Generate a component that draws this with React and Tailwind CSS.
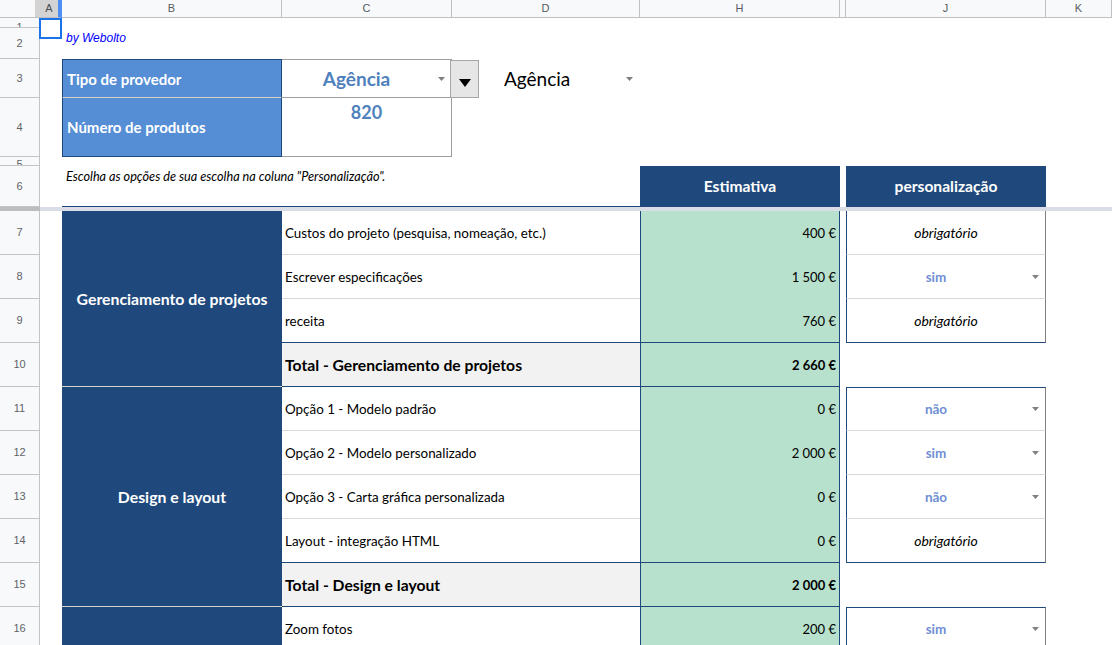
import React from "react";
import clsx from "clsx";

function Tri({ color = "#808080", w = 7, h = 4 }) {
  return (
    <svg width={w} height={h} viewBox={`0 0 ${w} ${h}`}>
      <path d={`M0 0H${w}L${w / 2} ${h}Z`} fill={color} />
    </svg>
  );
}

const colHeads = [
  ["B", "col-start-3"],
  ["C", "col-start-4"],
  ["D", "col-start-5"],
  ["H", "col-start-6"],
  ["", "col-start-7"],
  ["J", "col-start-8"],
  ["K", "col-start-9"],
];

const rowHeads = [
  ["1", "row-start-2", "items-start pt-[3px]"],
  ["2", "row-start-3", "items-center"],
  ["3", "row-start-4", "items-center"],
  ["4", "row-start-5", "items-center"],
  ["5", "row-start-6", "items-start pt-[1px]"],
  ["6", "row-start-7", "items-center"],
  ["7", "row-start-9", "items-center"],
  ["8", "row-start-10", "items-center"],
  ["9", "row-start-11", "items-center"],
  ["10", "row-start-12", "items-center"],
  ["11", "row-start-13", "items-center"],
  ["12", "row-start-14", "items-center"],
  ["13", "row-start-15", "items-center"],
  ["14", "row-start-16", "items-center"],
  ["15", "row-start-17", "items-center"],
  ["16", "row-start-18", "items-center"],
];

const body = [
  { row: "row-start-9", desc: "Custos do projeto (pesquisa, nomeação, etc.)", val: "400 €", j: "obr" },
  { row: "row-start-10", desc: "Escrever especificações", val: "1 500 €", j: "sim" },
  { row: "row-start-11", desc: "receita", val: "760 €", j: "obr", beforeTotal: true },
  { row: "row-start-12", desc: "Total - Gerenciamento de projetos", val: "2 660 €", total: true },
  { row: "row-start-13", desc: "Opção 1 - Modelo padrão", val: "0 €", j: "não", jTop: true },
  { row: "row-start-14", desc: "Opção 2 - Modelo personalizado", val: "2 000 €", j: "sim" },
  { row: "row-start-15", desc: "Opção 3 - Carta gráfica personalizada", val: "0 €", j: "não" },
  { row: "row-start-16", desc: "Layout - integração HTML", val: "0 €", j: "obr", beforeTotal: true },
  { row: "row-start-17", desc: "Total - Design e layout", val: "2 000 €", total: true },
  { row: "row-start-18", desc: "Zoom fotos", val: "200 €", j: "sim", jTop: true },
];

export default function App() {
  return (
    <div className="grid w-[1112px] h-[645px] overflow-hidden bg-white grid-cols-[40px_22px_220px_170px_188px_200px_6px_200px_66px] grid-rows-[18px_10px_31px_39px_59px_9px_41px_4px_repeat(10,44px)] font-['Lato','Open_Sans',sans-serif]">
      {/* corner */}
      <div className="col-start-1 row-start-1 flex bg-[#f8f9fa] border-b border-[#c0c0c0]">
        <div className="flex-1" />
        <div className="w-[5px] bg-[#d3d3d3]" />
      </div>
      {/* column A header (selected) */}
      <div className="col-start-2 row-start-1 flex items-center justify-center bg-[#d3d3d3] border-b border-b-[#c0c0c0] border-r-4 border-r-[#4d8ef5] text-[11px] text-[#4a4d52] font-['Liberation_Sans',Arial,sans-serif]">
        A
      </div>
      {colHeads.map(([l, c]) => (
        <div
          key={c}
          className={clsx(
            c,
            "row-start-1 flex items-center justify-center bg-[#f8f9fa] border-r border-b border-[#c0c0c0] text-[11px] text-[#575b61] font-['Liberation_Sans',Arial,sans-serif]"
          )}
        >
          {l}
        </div>
      ))}

      {/* row headers */}
      {rowHeads.map(([n, r, al]) => (
        <div
          key={r}
          className={clsx(
            r,
            al,
            "col-start-1 flex justify-center overflow-hidden bg-[#f8f9fa] border-r border-b border-[#c4c4c4] text-[11px] leading-[13px] text-[#5f6368] font-['Liberation_Sans',Arial,sans-serif]"
          )}
        >
          {n}
        </div>
      ))}

      {/* freeze bar */}
      <div className="col-start-1 row-start-8 bg-[#bdbdbd]" />
      <div className="col-start-2 col-span-8 row-start-8 bg-[#dadde5]" />

      {/* selection box on A1 */}
      <div className="col-start-2 row-start-2 row-span-2 self-start -ml-px w-[23px] h-[21px] border-2 border-[#1a73e8]" />

      {/* row 2 */}
      <div className="col-start-3 col-span-2 row-start-3 pl-[4px] pt-[3px] text-[12px] leading-[14px] italic text-[#0000ff] font-['Liberation_Sans',Arial,sans-serif]">
        by Webolto
      </div>

      {/* row 3 & 4 labels */}
      <div className="col-start-3 row-start-4 flex items-center pl-[4px] pt-[2px] bg-[#558ed5] border-t border-l border-r border-[#1f497d] border-b border-b-[#d8d0c0] text-white font-bold text-[15px]">
        Tipo de provedor
      </div>
      <div className="col-start-3 row-start-5 flex items-center pl-[4px] bg-[#558ed5] border-l border-r border-b border-[#1f497d] text-white font-bold text-[15px]">
        Número de produtos
      </div>

      {/* C3 dropdown */}
      <div className="col-start-4 row-start-4 flex items-center border-t border-r border-b border-[#9e9e9e]">
        <div className="flex-1 pt-[2px] text-center text-[19px] font-bold text-[#4f81bd]">Agência</div>
        <div className="w-[20px] flex justify-end pr-[6px]">
          <Tri />
        </div>
      </div>
      {/* C4 */}
      <div className="col-start-4 row-start-5 pt-[3px] text-center text-[18px] leading-[22px] font-bold text-[#4f81bd] border-r border-b border-[#9e9e9e]">
        820
      </div>

      {/* D3 */}
      <div className="col-start-5 row-start-4 flex items-stretch">
        <div className="-ml-[2px] mt-px w-[29px] flex justify-center pt-[18px] bg-[#e6e6e6] border border-[#a6a6a6]">
          <Tri color="#000000" w={12} h={8} />
        </div>
        <div className="ml-[25px] pt-[2px] flex items-center text-[19px] text-black">Agência</div>
        <div className="flex-1" />
        <div className="flex items-center pr-[7px]">
          <Tri />
        </div>
      </div>

      {/* row 6 */}
      <div className="col-start-3 col-span-3 row-start-7 pl-[4px] pt-[3px] text-[12.7px] leading-[15px] italic text-black border-b border-[#1f497d]">
        Escolha as opções de sua escolha na coluna "Personalização".
      </div>
      <div className="col-start-6 row-start-7 flex items-center justify-center bg-[#1f497d] text-white font-bold text-[15.6px]">
        Estimativa
      </div>
      <div className="col-start-8 row-start-7 flex items-center justify-center bg-[#1f497d] text-white font-bold text-[15.6px]">
        personalização
      </div>

      {/* B groups */}
      <div className="col-start-3 row-start-9 row-span-4 flex items-center justify-center bg-[#1f497d] border-b border-[#d8d3c8] text-white font-bold text-[15.8px]">
        Gerenciamento de projetos
      </div>
      <div className="col-start-3 row-start-13 row-span-5 flex items-center justify-center bg-[#1f497d] border-b border-[#d8d3c8] text-white font-bold text-[15.8px]">
        Design e layout
      </div>
      <div className="col-start-3 row-start-18 bg-[#1f497d]" />

      {/* body rows */}
      {body.map((b) => (
        <React.Fragment key={b.row}>
          <div
            className={clsx(
              b.row,
              "col-start-4 col-span-2 flex items-center pl-[3px] pt-[2px] border-b text-black",
              b.total ? "bg-[#f2f2f2] font-bold text-[15.7px]" : "text-[13.4px]",
              b.total || b.beforeTotal ? "border-[#1f497d]" : "border-[#d9d9d9]"
            )}
          >
            {b.desc}
          </div>
          <div
            className={clsx(
              b.row,
              "col-start-6 flex items-center justify-end pr-[3px] pt-[2px] bg-[#b7e1cd] border-l border-r border-[#1f497d] text-[13px] text-black",
              b.total && "font-bold",
              (b.total || b.beforeTotal) && "border-b"
            )}
          >
            {b.val}
          </div>
          {!b.total && (
            <div
              className={clsx(
                b.row,
                "col-start-8 flex items-center border-l border-l-[#1f497d] border-r border-r-[#7f7f7f] border-b",
                b.beforeTotal ? "border-b-[#1f497d]" : "border-b-[#d9d9d9]",
                b.jTop && "border-t border-t-[#1f497d]"
              )}
            >
              {b.j === "obr" ? (
                <div className="flex-1 text-center italic text-[14px] text-black">obrigatório</div>
              ) : (
                <>
                  <div className="flex-1 pt-px text-center font-bold text-[13.5px] text-[#6f8fd3]">{b.j}</div>
                  <div className="w-[20px] flex justify-end pr-[6px]">
                    <Tri />
                  </div>
                </>
              )}
            </div>
          )}
        </React.Fragment>
      ))}
    </div>
  );
}
